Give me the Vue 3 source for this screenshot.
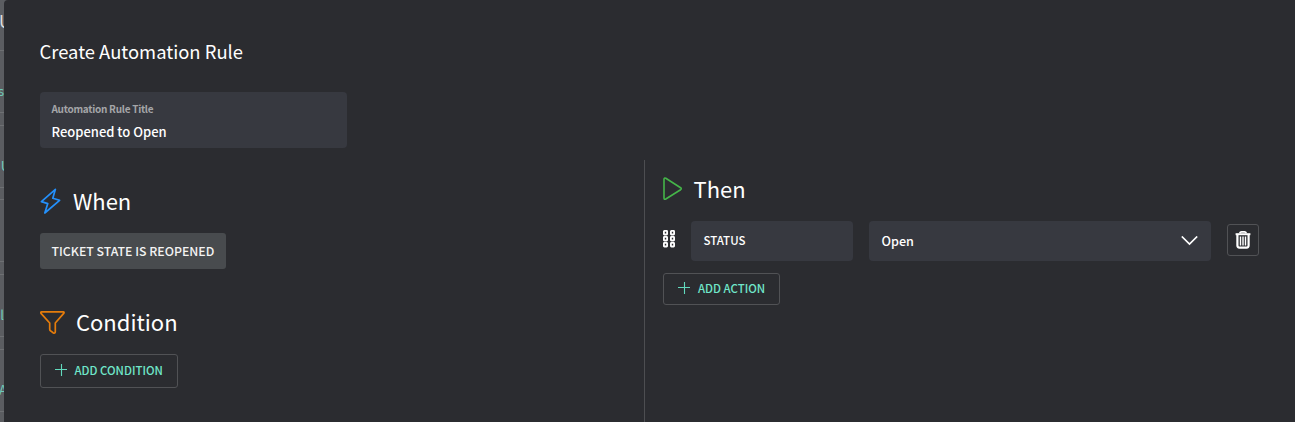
<script setup>
const rows = [
  { text: 's', tone: 'teal' },
  { text: 'U', tone: 'teal cut' },
  { text: '', tone: 'teal' },
  { text: 'ol', tone: 'teal' },
  { text: 'A', tone: 'teal nudge' },
]
const dots = [
  [1, 1], [8, 1],
  [1, 7], [8, 7],
  [1, 13], [8, 13],
]
</script>

<template>
  <div class="screen">
    <aside class="backdrop">
      <div class="heading-row"><span>U</span></div>
      <div v-for="(row, i) in rows" :key="i" class="list-row">
        <span :class="row.tone">{{ row.text }}</span>
      </div>
    </aside>

    <main class="dialog">
      <h1>Create Automation Rule</h1>
      <div class="title-field">
        <label>Automation Rule Title</label>
        <span class="value">Reopened to Open</span>
      </div>

      <div class="columns">
        <section class="left">
          <h2 class="when">
            <svg width="22" height="27" viewBox="0 0 22 27" fill="none" stroke="#2490fb" stroke-width="1.7" stroke-linejoin="round">
              <path d="M15.4 1.3 1.4 13.6 7.8 15.6 4.8 25 19.6 12.3 12.8 10.2Z" />
            </svg>
            <span>When</span>
          </h2>
          <div class="chip">TICKET STATE IS REOPENED</div>
          <h2 class="condition">
            <svg width="26" height="24" viewBox="0 0 26 24" fill="none" stroke="#e57c0b" stroke-width="1.7" stroke-linejoin="round">
              <path d="M1.7 .9H23.2Q24.6 1.1 23.7 2.4L15.3 12V20.8Q15 22.9 13.1 21.7L10.7 19.9Q9.7 19.3 9.7 18.2V12L1 2.4Q.2 1.1 1.7 .9Z" />
            </svg>
            <span>Condition</span>
          </h2>
          <button class="add add-condition">
            <svg width="12" height="12" viewBox="0 0 12 12" stroke="#62d9bd" stroke-width="1.1"><path d="M6.5 0V12M0 5.5H12" /></svg>
            <span>ADD CONDITION</span>
          </button>
        </section>

        <section class="right">
          <h2 class="then">
            <svg width="20" height="24" viewBox="0 0 20 24" fill="none" stroke="#45b549" stroke-width="1.6" stroke-linejoin="round">
              <path d="M1 2.3Q1 .4 2.8 1.3L17.6 10.7Q19 11.7 17.6 12.7L2.8 22Q1 22.9 1 21.1Z" />
            </svg>
            <span>Then</span>
          </h2>
          <div class="action">
            <svg class="grip" width="13" height="18" viewBox="0 0 13 18" fill="none" stroke="#fff" stroke-width="1.8">
              <rect v-for="([x, y], i) in dots" :key="i" :x="x - .1" :y="y - .1" width="3.2" height="3.6" rx=".5" />
            </svg>
            <div class="status">STATUS</div>
            <div class="select">
              <span>Open</span>
              <svg width="17" height="10" viewBox="0 0 17 10" fill="none" stroke="#fff" stroke-width="1.7"><path d="M.8 .5 8.5 8 16.2 .5" /></svg>
            </div>
            <button class="trash">
              <svg width="16" height="18" viewBox="0 0 16 18" fill="none" stroke="#fff">
                <path d="M4.7 2.2Q5.2.9 6.5.9H9.5Q10.8.9 11.3 2.2" stroke-width="1.8" />
                <path d="M.6 3.2H15.4" stroke-width="2" />
                <path d="M2.4 4V14.6Q2.4 16.6 4.4 16.6H11.6Q13.6 16.6 13.6 14.6V4" stroke-width="2.2" />
                <path d="M5.5 5.6V14.4M8 5.6V14.4M10.5 5.6V14.4" stroke-width="1.4" />
              </svg>
            </button>
          </div>
          <button class="add add-action">
            <svg width="12" height="12" viewBox="0 0 12 12" stroke="#62d9bd" stroke-width="1.1"><path d="M6.5 0V12M0 5.5H12" /></svg>
            <span>ADD ACTION</span>
          </button>
        </section>
      </div>
    </main>
  </div>
</template>

<style>
body { margin: 0; background: #5b5d61; }
</style>

<style scoped>
* { box-sizing: border-box; }
.screen {
  display: flex;
  width: 1295px;
  height: 422px;
  overflow: hidden;
  background: #5b5d61;
  color: #fff;
  font-family: "Noto Sans CJK SC", "Noto Sans", sans-serif;
}
.backdrop { width: 4px; flex: none; overflow: hidden; }
.heading-row { height: 50px; display: flex; justify-content: flex-start; padding-top: 7px; font-size: 17px; line-height: 27px; color: #ddd; }
.heading-row span { margin-left: -1px; }
.list-row {
  height: 63px;
  margin-bottom: 11.7px;
  border: solid #6e7073;
  border-width: 1px 0;
  display: flex;
  align-items: center;
  justify-content: flex-end;
  font-size: 13px;
  padding-top: 18px;
}
.teal { color: #6fc9b8; }
.cut { margin-right: -6px; }
.nudge { margin-right: -3px; }
.dialog {
  flex: 1;
  min-width: 0;
  background: #2b2c30;
  border-top-left-radius: 4px;
  padding: 37px 36px 0 36px;
}
h1, h2 { margin: 0; font-weight: 400; white-space: nowrap; }
h1 { font-size: 18.4px; line-height: 28px; margin-left: -.5px; }
.title-field {
  width: 307px;
  height: 56px;
  margin-top: 27px;
  padding: 9px 11.5px 0;
  border-radius: 4px;
  background: #373940;
  display: flex;
  flex-direction: column;
}
label { font-size: 10px; line-height: 16px; font-weight: 700; letter-spacing: -.27px; color: #a4a5a8; }
.value { font-size: 13px; line-height: 20px; margin-top: 5px; font-weight: 500; }
.columns { display: flex; margin-top: 12px; height: 262px; }
.left { width: 604px; padding-top: 22px; }
.right { flex: 1; border-left: 1px solid #4d4e51; padding: 10px 0 0 18px; }
h2 { display: flex; align-items: center; height: 38px; font-size: 22px; line-height: 36px; }
h2 span { height: 38px; }
.when { gap: 11px; }
.condition { gap: 10px; margin-top: 35px; }
.condition svg { margin-top: -1px; }
.condition span { line-height: 34px; }
.then { gap: 10.5px; }
.chip {
  width: 186px;
  height: 36px;
  margin-top: 13px;
  padding-left: 11.5px;
  border-radius: 3px;
  background: #484b4e;
  color: #f3f3f3;
  font-size: 12.3px;
  line-height: 36px;
  font-weight: 500;
  white-space: nowrap;
}
button { font-family: inherit; background: transparent; border: 1px solid #515255; border-radius: 3px; margin: 0; padding: 0; }
.add { display: flex; align-items: center; gap: 8px; padding-left: 14px; color: #70e6ca; font-size: 11.4px; font-weight: 500; white-space: nowrap; }
.add span { position: relative; top: -1px; }
.add svg { position: relative; top: -1px; }
.add-condition { width: 138px; height: 34px; margin-top: 12px; gap: 7.5px; }
.add-action { width: 117px; height: 32px; margin-top: 12px; }
.action { display: flex; align-items: center; height: 40px; margin-top: 13px; }
.grip { margin-right: 15px; position: relative; top: -2px; }
.status, .select { height: 40px; border-radius: 4px; background: #373940; font-weight: 500; line-height: 40px; padding-left: 12.5px; }
.status { width: 162px; font-size: 11.5px; line-height: 38px; }
.select { width: 342px; margin-left: 16px; padding-right: 13px; display: flex; align-items: center; justify-content: space-between; font-size: 12.6px; }
.trash { width: 32px; height: 32px; margin: -2px 0 0 16px; display: flex; align-items: center; justify-content: center; }
</style>
